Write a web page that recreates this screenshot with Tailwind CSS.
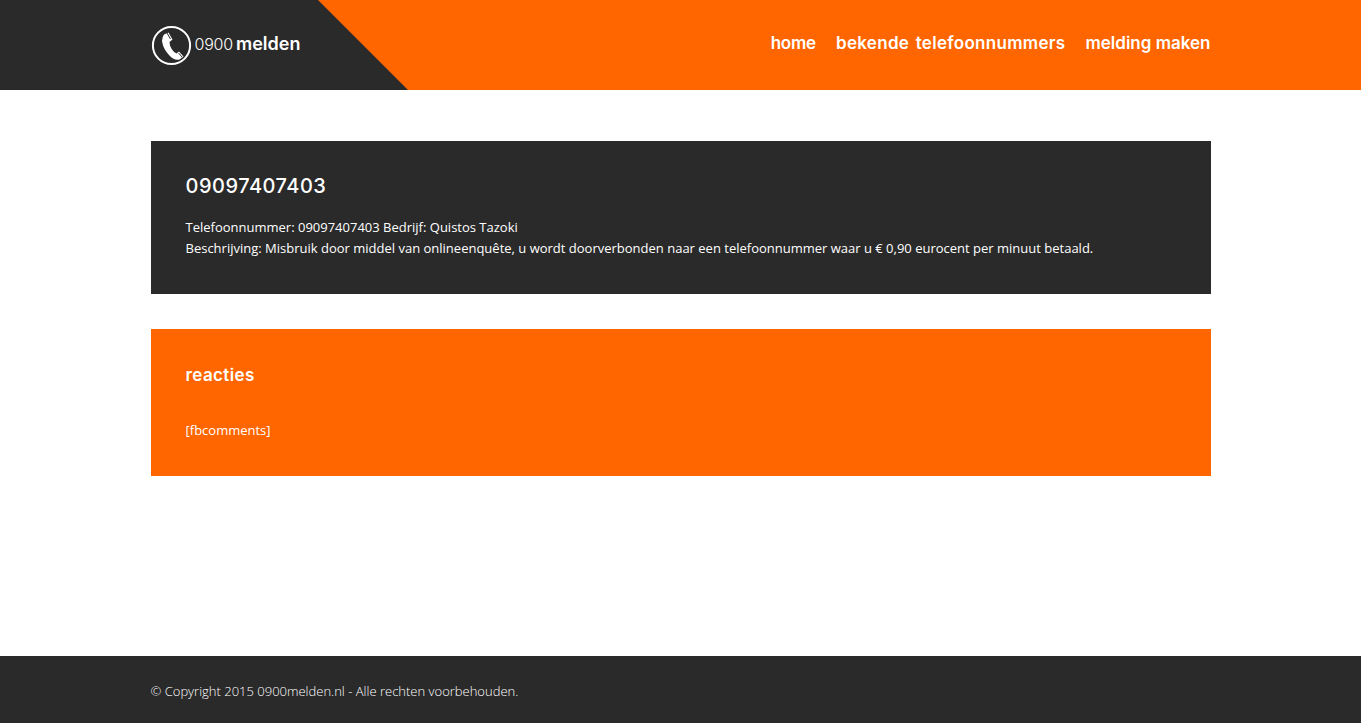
<!DOCTYPE html>
<html lang="nl">
  <head>
    <meta charset="UTF-8" />
    <meta name="viewport" content="width=device-width, initial-scale=1.0" />
    <title>09097407403 - 0900melden</title>
    <script src="https://cdn.jsdelivr.net/npm/@tailwindcss/browser@4"></script>
  </head>
  <body class="bg-white font-['Open_Sans',sans-serif] text-[13px] leading-[21px] text-white">
    <div class="flex flex-col min-h-[723px]">
      <header class="relative h-[90px] bg-[#ff6600] overflow-hidden">
        <div class="absolute top-0 left-0 h-[90px] w-[408px] bg-[#2a2a2a] [clip-path:polygon(0_0,318px_0,408px_90px,0_90px)]"></div>
        <div class="relative w-[1060px] mx-auto h-full flex items-start justify-between">
          <a href="#" class="flex items-center mt-[25px] h-[41px]">
            <svg class="w-[41px] h-[41px]" viewBox="0 0 41 41" fill="none">
              <circle cx="20.5" cy="20.5" r="18.6" stroke="#fff" stroke-width="2" />
              <path d="M13 9.5 L17.5 7.5 L21.5 14.5 L18.5 17 Q18.5 21 21 24.5 Q23 27.5 25.5 28.5 L28 26.5 L32.5 31.5 L28.5 34.5 Q23 36 17.5 29.5 Q12 23.5 11 16 Q11 12 13 9.5 Z" fill="#fff" />
              <path d="M16 8 L19.5 14" stroke="#2a2a2a" stroke-width="1" />
              <path d="M27.5 28 L31 32" stroke="#2a2a2a" stroke-width="1" />
            </svg>
            <span class="ml-[3px] mb-[3px] font-['Inter',sans-serif] font-light text-[16px] leading-none tracking-[-0.2px]">0900</span>
            <span class="ml-[3px] mb-[4px] font-['Inter',sans-serif] font-semibold text-[18px] leading-none">melden</span>
          </a>
          <nav class="flex gap-[20px] mt-[31px] font-['Inter',sans-serif] font-semibold text-[17px] leading-[24px]">
            <a href="#" class="tracking-[-0.2px]">home</a>
            <a href="#" class="tracking-[0.3px] [word-spacing:2px]">bekende telefoonnummers</a>
            <a href="#">melding maken</a>
          </nav>
        </div>
      </header>

      <main class="w-[1060px] mx-auto pt-[51px] flex flex-col gap-[35px]">
        <section class="h-[153px] bg-[#2a2a2a] px-[35px] pt-[31px]">
          <h1 class="font-['Inter',sans-serif] font-medium text-[20px] leading-[28px] tracking-[0.5px]">09097407403</h1>
          <p class="mt-[17px]">Telefoonnummer: 09097407403 Bedrijf: Quistos Tazoki<br />Beschrijving: Misbruik door middel van onlineenquête, u wordt doorverbonden naar een telefoonnummer waar u € 0,90 eurocent per minuut betaald.</p>
        </section>
        <section class="h-[147px] bg-[#ff6600] px-[35px] pt-[34px]">
          <h2 class="font-['Inter',sans-serif] font-semibold text-[17px] leading-[24px] tracking-[0.4px]">reacties</h2>
          <p class="mt-[33px]">[fbcomments]</p>
        </section>
      </main>

      <footer class="mt-auto h-[67px] bg-[#2a2a2a]">
        <div class="w-[1060px] mx-auto pt-[25px] font-light text-white">© Copyright 2015 0900melden.nl - Alle rechten voorbehouden.</div>
      </footer>
    </div>
  </body>
</html>
